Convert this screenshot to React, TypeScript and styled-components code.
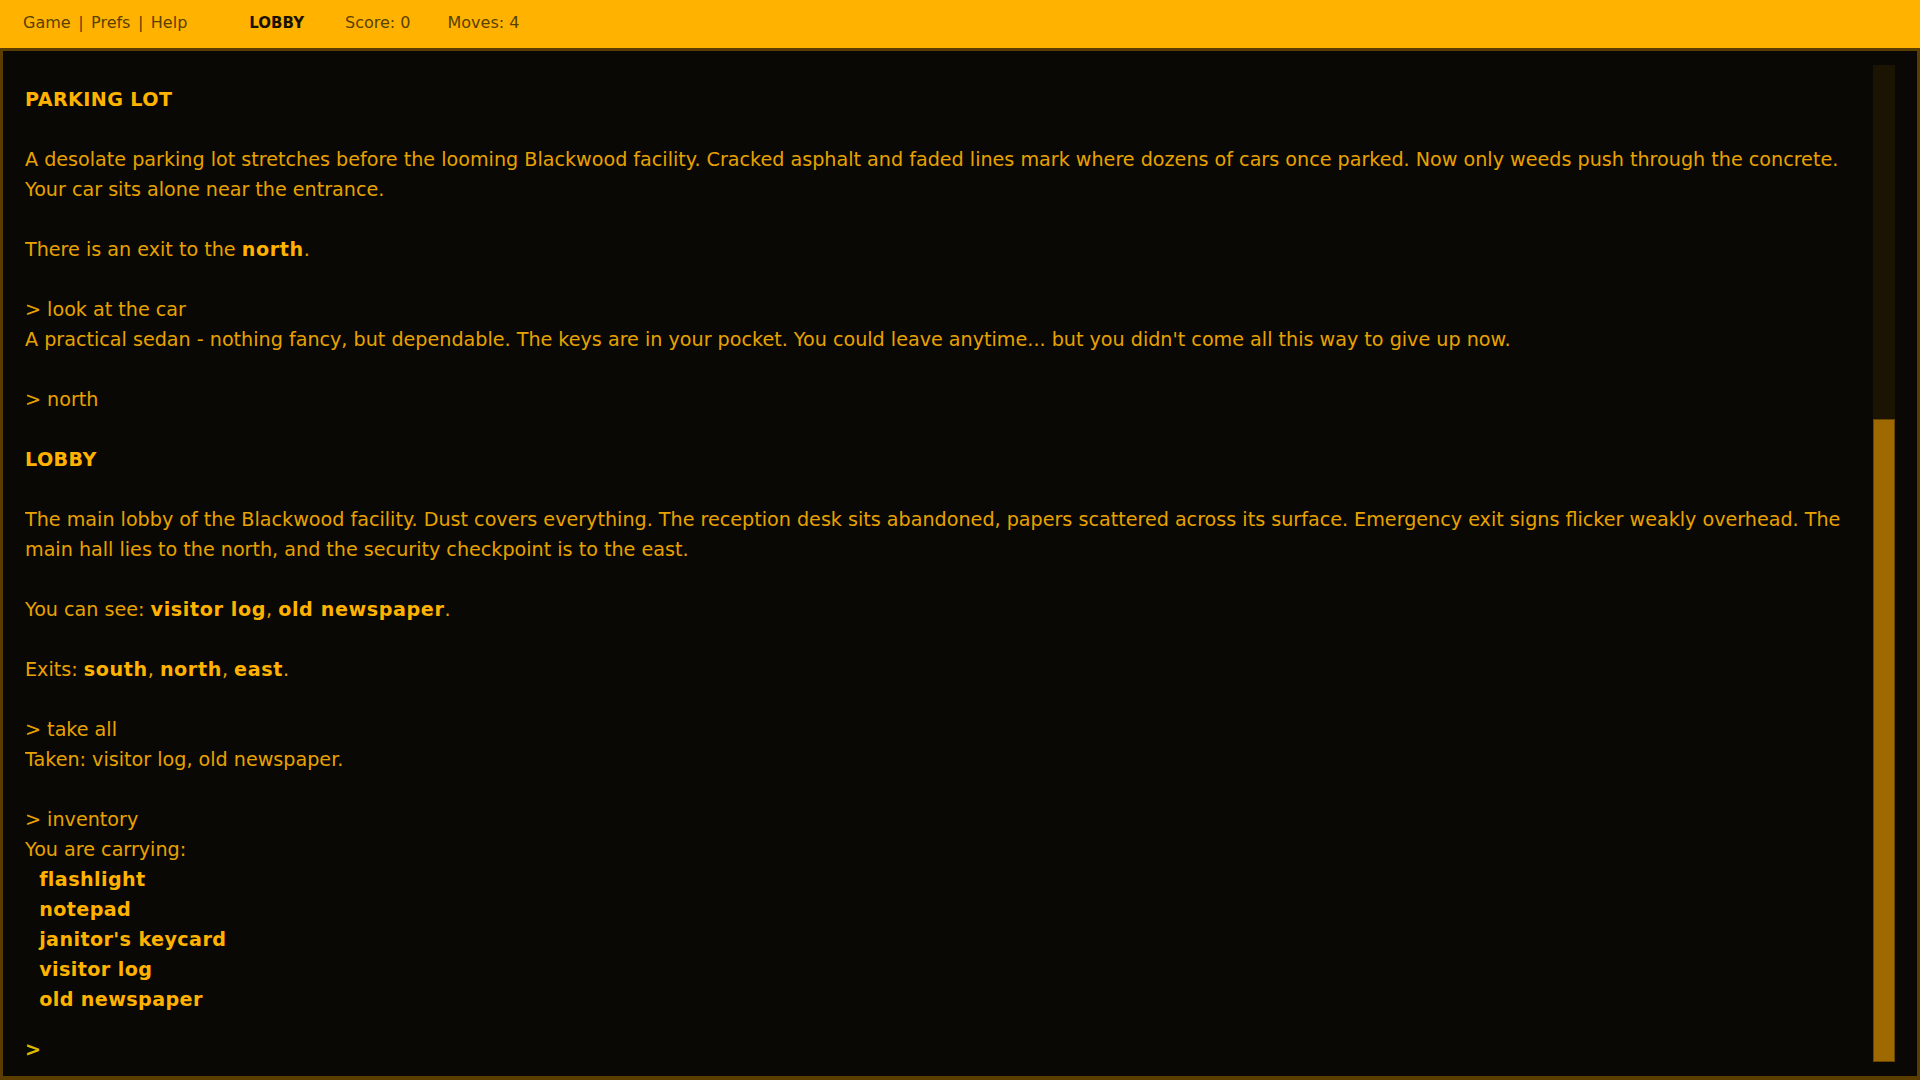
import React from 'react';
import styled, { createGlobalStyle } from 'styled-components';

const GlobalStyle = createGlobalStyle`
	html, body {
		margin: 0;
		height: 100%;
		background: #0a0804;
		overflow: hidden;
	}

	#root {
		height: 100%;
	}
`;

type Segment = { text: string; bold?: boolean };

interface Block {
	kind: 'title' | 'text' | 'command' | 'item';
	segments: Segment[];
	gap?: boolean;
}

const plain = (text: string): Segment[] => [ { text } ];

const transcript: Block[] = [
	{ kind: 'title', segments: plain('PARKING LOT'), gap: true },
	{
		kind: 'text',
		segments: plain('A desolate parking lot stretches before the looming Blackwood facility. Cracked asphalt and faded lines mark where dozens of cars once parked. Now only weeds push through the concrete. Your car sits alone near the entrance.'),
		gap: true,
	},
	{ kind: 'text', segments: [ { text: 'There is an exit to the ' }, { text: 'north', bold: true }, { text: '.' } ], gap: true },
	{ kind: 'command', segments: plain('> look at the car') },
	{
		kind: 'text',
		segments: plain('A practical sedan - nothing fancy, but dependable. The keys are in your pocket. You could leave anytime... but you didn\'t come all this way to give up now.'),
		gap: true,
	},
	{ kind: 'command', segments: plain('> north'), gap: true },
	{ kind: 'title', segments: plain('LOBBY'), gap: true },
	{
		kind: 'text',
		segments: plain('The main lobby of the Blackwood facility. Dust covers everything. The reception desk sits abandoned, papers scattered across its surface. Emergency exit signs flicker weakly overhead. The main hall lies to the north, and the security checkpoint is to the east.'),
		gap: true,
	},
	{
		kind: 'text',
		segments: [
			{ text: 'You can see: ' },
			{ text: 'visitor log', bold: true },
			{ text: ', ' },
			{ text: 'old newspaper', bold: true },
			{ text: '.' },
		],
		gap: true,
	},
	{
		kind: 'text',
		segments: [
			{ text: 'Exits: ' },
			{ text: 'south', bold: true },
			{ text: ', ' },
			{ text: 'north', bold: true },
			{ text: ', ' },
			{ text: 'east', bold: true },
			{ text: '.' },
		],
		gap: true,
	},
	{ kind: 'command', segments: plain('> take all') },
	{ kind: 'text', segments: plain('Taken: visitor log, old newspaper.'), gap: true },
	{ kind: 'command', segments: plain('> inventory') },
	{ kind: 'text', segments: plain('You are carrying:') },
	{ kind: 'item', segments: plain('flashlight') },
	{ kind: 'item', segments: plain('notepad') },
	{ kind: 'item', segments: plain('janitor\'s keycard') },
	{ kind: 'item', segments: plain('visitor log') },
	{ kind: 'item', segments: plain('old newspaper') },
];

const Screen = styled.div`
	display: flex;
	flex-direction: column;
	height: 100vh;
	font-family: "DejaVu Sans", Verdana, sans-serif;
`;

const TopBar = styled.header`
	display: flex;
	align-items: baseline;
	gap: 41px;
	height: 48px;
	padding: 13px 23px 0;
	box-sizing: border-box;
	background: #ffb300;
	color: #594000;
	font-size: 16px;
	flex-shrink: 0;
`;

const Menu = styled.nav`
	display: flex;
	align-items: baseline;
	margin-right: 21px;
`;

const MenuLink = styled.span`
	cursor: pointer;
`;

const MenuSeparator = styled.span`
	margin: 0 7.5px;
`;

const RoomName = styled.span`
	font-size: 15px;
	font-weight: 700;
	color: #1a1200;
`;

const Stats = styled.div`
	display: flex;
	align-items: baseline;
	gap: 37px;
`;

const Stat = styled.span`
	color: #594000;
`;

const Main = styled.main`
	flex: 1;
	min-height: 0;
	display: flex;
	padding: 14px 22px;
	border: 3px solid #5c3d00;
	border-bottom-width: 4px;
`;

const Output = styled.div`
	flex: 1;
	min-width: 0;
	display: flex;
	flex-direction: column;
	padding: 20px 13px 0 0;
	overflow: hidden;
	font-size: 19.15px;
	line-height: 30px;
	color: #e8a200;
`;

const Line = styled.div<{ $kind: Block['kind']; $gap?: boolean }>`
	white-space: pre-wrap;
	margin-bottom: ${({ $gap }) => ($gap ? '30px' : '0')};
	font-weight: ${({ $kind }) => ($kind === 'title' || $kind === 'item' ? 700 : 400)};
	letter-spacing: ${({ $kind }) => ($kind === 'title' || $kind === 'item' ? '0.4px' : 'normal')};
	color: ${({ $kind }) => ($kind === 'title' || $kind === 'item' ? '#ffb300' : '#e8a200')};
`;

const Strong = styled.b`
	color: #ffb300;
	letter-spacing: 0.6px;
`;

const InputRow = styled.label`
	display: flex;
	align-items: center;
	height: 24px;
	margin-top: 23px;
	color: #dcb800;
	font-weight: 700;
`;

const CommandInput = styled.input`
	flex: 1;
	margin-left: 10px;
	border: none;
	outline: none;
	background: transparent;
	color: #e8a200;
	font: inherit;
	font-weight: 400;
	caret-color: #dcb800;
`;

const ScrollTrack = styled.div`
	width: 22px;
	display: flex;
	flex-direction: column;
	justify-content: flex-end;
	background: #1c1403;
	flex-shrink: 0;
`;

const ScrollThumb = styled.div<{ $size: number }>`
	height: ${({ $size }) => $size}%;
	background: #9e6900;
	box-shadow: inset 0 0 0 1px #6a4500;
`;

const App: React.FC = () => (
	<>
		<GlobalStyle />
		<Screen>
			<TopBar>
				<Menu>
					<MenuLink>Game</MenuLink>
					<MenuSeparator>|</MenuSeparator>
					<MenuLink>Prefs</MenuLink>
					<MenuSeparator>|</MenuSeparator>
					<MenuLink>Help</MenuLink>
				</Menu>
				<RoomName>LOBBY</RoomName>
				<Stats>
					<Stat>Score: 0</Stat>
					<Stat>Moves: 4</Stat>
				</Stats>
			</TopBar>
			<Main>
				<Output>
					{transcript.map((block, index) => (
						<Line key={index} $kind={block.kind} $gap={block.gap}>
							{block.kind === 'item' && '  '}
							{block.segments.map((segment, i) =>
								segment.bold ? <Strong key={i}>{segment.text}</Strong> : <React.Fragment key={i}>{segment.text}</React.Fragment>
							)}
						</Line>
					))}
					<InputRow>
						&gt;
						<CommandInput aria-label="command" />
					</InputRow>
				</Output>
				<ScrollTrack>
					<ScrollThumb $size={64.5} />
				</ScrollTrack>
			</Main>
		</Screen>
	</>
);

export default App;
